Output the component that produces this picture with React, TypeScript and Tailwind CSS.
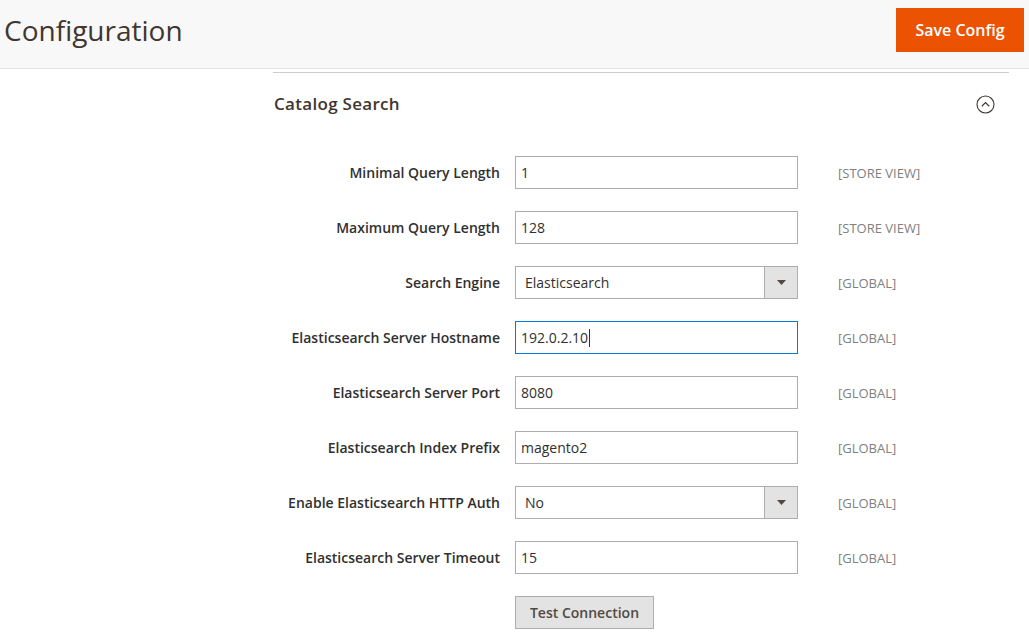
import React from "react";

type Row = {
  label: string;
  value: string;
  scope: string;
  kind?: "select" | "focus";
};

const rows: Row[] = [
  { label: "Minimal Query Length", value: "1", scope: "[STORE VIEW]" },
  { label: "Maximum Query Length", value: "128", scope: "[STORE VIEW]" },
  { label: "Search Engine", value: "Elasticsearch", scope: "[GLOBAL]", kind: "select" },
  { label: "Elasticsearch Server Hostname", value: "192.0.2.10", scope: "[GLOBAL]", kind: "focus" },
  { label: "Elasticsearch Server Port", value: "8080", scope: "[GLOBAL]" },
  { label: "Elasticsearch Index Prefix", value: "magento2", scope: "[GLOBAL]" },
  { label: "Enable Elasticsearch HTTP Auth", value: "No", scope: "[GLOBAL]", kind: "select" },
  { label: "Elasticsearch Server Timeout", value: "15", scope: "[GLOBAL]" },
];

function Field({ row }: { row: Row }) {
  if (row.kind === "select") {
    return (
      <div className="flex h-[33px] w-[283px] items-stretch border border-[#adadad] bg-white">
        <div className="flex flex-1 items-center pl-[9px] text-[14px] text-[#303030]">{row.value}</div>
        <div className="flex w-[33px] items-center justify-center border-l border-[#adadad] bg-[#e3e3e3]">
          <svg width="9" height="5" viewBox="0 0 9 5">
            <path d="M0 0 L9 0 L4.5 5 Z" fill="#514943" />
          </svg>
        </div>
      </div>
    );
  }
  const focus = row.kind === "focus";
  return (
    <div
      className={`flex h-[33px] w-[283px] items-center border bg-white pl-[5px] text-[14px] text-[#303030] ${
        focus ? "border-[#007bdb]" : "border-[#adadad]"
      }`}
    >
      <span>{row.value}</span>
      {focus && <span className="ml-px inline-block h-[18px] w-px bg-[#303030]" />}
    </div>
  );
}

export default function App() {
  return (
    <div className="h-[632px] w-[1029px] overflow-hidden bg-white font-['Open_Sans',sans-serif] text-[#303030]">
      <header className="flex h-[69px] items-start justify-between border-b border-[#e3e3e3] bg-[#f8f8f8] pl-[4px] pr-[5px]">
        <h1 className="mt-[10px] text-[28px] font-normal leading-[40px] text-[#41362f]">Configuration</h1>
        <button className="mt-[8px] h-[44px] w-[128px] bg-[#eb5202] text-[16px] font-semibold text-white">
          Save Config
        </button>
      </header>

      <div className="flex">
        <div className="w-[273px] shrink-0" />
        <main className="w-[736px] border-t border-[#cccccc] mt-[3px]">
          <div className="flex h-[62px] items-center justify-between pl-px pr-[14px]">
            <h2 className="text-[17px] font-semibold tracking-[0.3px] text-[#41362f]">Catalog Search</h2>
            <svg width="19" height="19" viewBox="0 0 19 19">
              <circle cx="9.5" cy="9.5" r="8.5" fill="none" stroke="#41362f" strokeWidth="1.1" />
              <path d="M5.8 11.2 L9.5 7.6 L13.2 11.2" fill="none" stroke="#41362f" strokeWidth="1.2" />
            </svg>
          </div>

          <div className="mt-[21px] flex flex-col gap-[22px]">
            {rows.map((row) => (
              <div key={row.label} className="flex items-center">
                <div className="w-[227px] text-right text-[14px] font-semibold text-[#303030]">{row.label}</div>
                <div className="ml-[15px]">
                  <Field row={row} />
                </div>
                <div className="ml-[40px] mt-[2px] text-[13px] text-[#808080]">{row.scope}</div>
              </div>
            ))}
            <div className="flex">
              <div className="w-[227px]" />
              <button className="ml-[15px] h-[33px] w-[139px] border border-[#adadad] bg-[#e3e3e3] text-[14px] font-semibold text-[#514943]">
                Test Connection
              </button>
            </div>
          </div>
        </main>
      </div>
    </div>
  );
}
